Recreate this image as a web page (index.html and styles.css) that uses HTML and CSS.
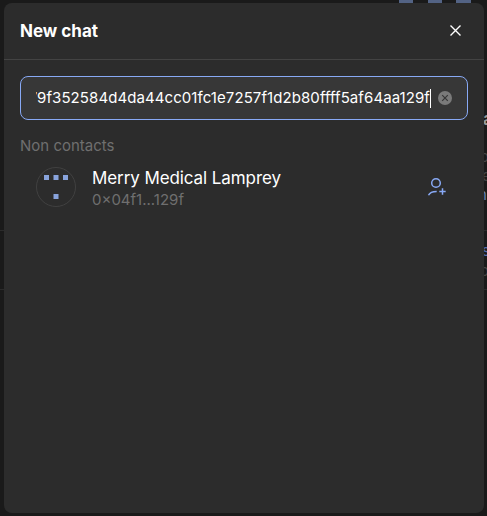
FILE: index.html
```html
<!DOCTYPE html>
<html lang="en">
<head>
<meta charset="utf-8">
<title>New chat</title>
<link rel="stylesheet" href="styles.css">
</head>
<body>
<div class="backdrop">
  <svg class="backdrop-art" width="487" height="516" aria-hidden="true">
    <path fill="#536384" d="M399 0h14v4h-14zM428 0h14v4h-14zM456 0h15v4h-15z"/>
    <path stroke="#2b2b2b" d="M0 230.5h487M0 289.5h487"/>
  </svg>
  <span class="peek peek-title">a</span>
  <span class="peek peek-one">o</span>
  <span class="peek peek-two">e</span>
  <span class="peek peek-three">n</span>
  <span class="peek peek-link">s</span>
  <span class="peek peek-four">o</span>
</div>
<main class="modal">
  <header class="header">
    <h1 class="title">New chat</h1>
    <svg class="close" width="24" height="24" viewBox="0 0 24 24" fill="none" stroke="#fff" stroke-width="1.4"><path d="M6.500 6.500l10 10M16.500 6.500l-10 10"/></svg>
  </header>
  <div class="field">
    <div class="value"><span class="value-text">79f352584d4da44cc01fc1e7257f1d2b80ffff5af64aa129f</span></div>
    <span class="caret"></span>
    <svg class="clear" width="14" height="14" viewBox="0 0 14 14"><circle cx="7" cy="7" r="7" fill="#7a7a7a"/><path d="M4.2 4.2l5.6 5.6M9.8 4.2L4.2 9.8" stroke="#373737" stroke-width="1.2"/></svg>
  </div>
  <h2 class="section">Non contacts</h2>
  <div class="contact">
    <svg class="avatar" width="40" height="40" viewBox="0 0 40 40"><circle cx="20" cy="20" r="19.5" fill="none" stroke="#414141"/><path fill="#88a3dc" d="M8 8h5v5H8zM17.500 8h5v5h-5zM27 8h5v5h-5zM17.500 27h5v5h-5z"/></svg>
    <div class="info">
      <div class="name">Merry Medical Lamprey</div>
      <div class="key">0×04f1...129f</div>
    </div>
    <svg class="add" width="24" height="24" viewBox="0 0 24 24" fill="none" stroke="#88a9f5" stroke-width="1.5"><circle cx="12" cy="8" r="4.300"/><path d="M4.500 20.300C5.600 17.800 8.800 16.500 12.700 16.500M18.500 13.300v6.400M15.300 16.500h6.400"/></svg>
  </div>
</main>
</body>
</html>
```
FILE: styles.css
```css
* { box-sizing: border-box; }
body {
  margin: 0;
  height: 516px;
  padding: 3px 3px 3px 4px;
  overflow: hidden;
  position: relative;
  background: #1a1a1a;
  color: #fff;
  font: 15px/22px Inter, sans-serif;
}
.backdrop { position: absolute; inset: 0; overflow: hidden; }
.backdrop-art { display: block; }
.peek { position: absolute; left: 482px; line-height: 20px; color: #444; }
.peek-title { top: 109px; left: 483px; font-size: 17px; font-weight: 600; color: #999; }
.peek-one { top: 147px; left: 480px; }
.peek-two { top: 166px; }
.peek-three { top: 185px; left: 478px; color: #6d83b5; }
.peek-link { top: 241px; color: #536bad; }
.peek-four { top: 261px; left: 480px; }
.modal {
  position: relative;
  height: 510px;
  border-radius: 8px;
  background: #2c2c2c;
}
.header {
  height: 57px;
  padding: 0 16px;
  display: flex;
  align-items: center;
  justify-content: space-between;
  border-bottom: 1px solid #434343;
}
.title { margin: 0; font-size: 17px; line-height: 24px; font-weight: 700; }
.field {
  height: 44px;
  margin: 16px 16px 0;
  padding: 0 15px 0 15px;
  display: flex;
  align-items: center;
  border: 1px solid #88a9f5;
  border-radius: 8px;
  background: #373737;
}
.value {
  flex: 1;
  min-width: 0;
  display: flex;
  justify-content: flex-end;
  overflow: hidden;
  white-space: nowrap;
  letter-spacing: 0.08px;
}
.caret { width: 1px; height: 19px; background: #fff; }
.clear { margin-left: 7px; }
.section {
  margin: 15px 16px 0;
  color: #6f6f6f;
  font-size: 15px;
  font-weight: 400;
  line-height: 22px;
}
.contact {
  height: 64px;
  padding: 0 36px 0 32px;
  display: flex;
  align-items: center;
  gap: 16px;
  margin-top: -2px;
}
.info { flex: 1; padding-top: 3px; }
.name { font-size: 17px; line-height: 22px; letter-spacing: -0.09px; }
.key { color: #6f6f6f; line-height: 22px; }
```
